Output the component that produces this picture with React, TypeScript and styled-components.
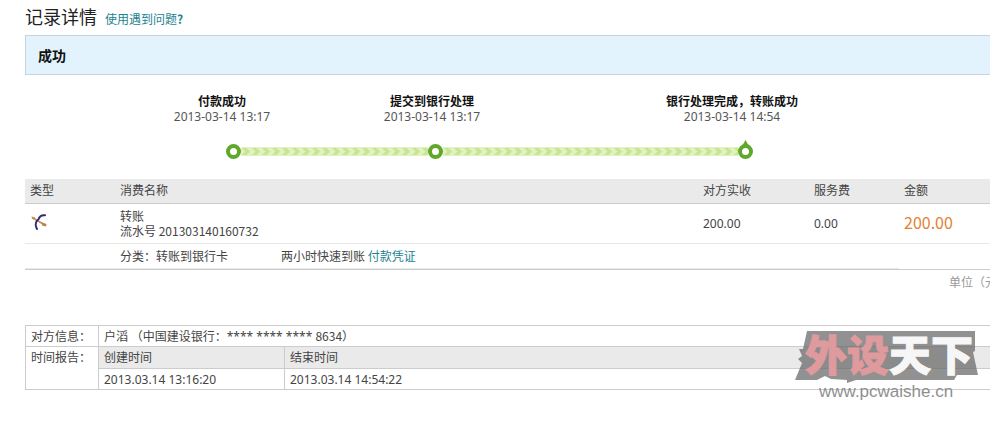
import React from "react";
import styled, { createGlobalStyle } from "styled-components";

const GlobalStyle = createGlobalStyle`
  *, *::before, *::after { box-sizing: border-box; }
  body {
    margin: 0;
    background: #fff;
    color: #444;
    font-family: "Noto Sans CJK SC", "Noto Sans", sans-serif;
    font-size: 12px;
    line-height: 15px;
  }
`;

const Page = styled.div`
  overflow: hidden;
`;

const Content = styled.main`
  margin: 0 -25px 24px 25px;
`;

const TitleBar = styled.header`
  display: flex;
  align-items: baseline;
  gap: 8px;
  padding-top: 3px;
  height: 35px;
`;

const Title = styled.h1`
  margin: 0;
  font-size: 18px;
  line-height: 26px;
  font-weight: 400;
  color: #222;
`;

const Link = styled.a`
  color: #1b8391;
  text-decoration: none;
`;

const StatusBanner = styled.div`
  padding: 9px 12px;
  border: 1px solid #c5d5e0;
  background: #e2f3fe;
  color: #111;
  font-size: 14px;
  line-height: 20px;
  font-weight: 700;
`;

const Steps = styled.ol`
  display: grid;
  grid-template-columns: 210px 210px 390px;
  margin: 18px 0 0 92px;
  padding: 0;
  list-style: none;
`;

const Step = styled.li`
  display: flex;
  flex-direction: column;
  align-items: center;
  color: #555;
  line-height: 16px;
`;

const StepName = styled.strong`
  color: #111;
`;

const Numeric = styled.span`
  font-family: "Noto Sans", sans-serif;
`;

const Track = styled.div`
  display: flex;
  align-items: flex-end;
  margin: 15px 0 20px 201px;
`;

const Segment = styled.svg<{ $length: number }>`
  display: block;
  width: ${(p) => p.$length}px;
  height: 9px;
  margin-bottom: 3px;
`;

const Marker = styled.svg`
  display: block;
  width: 15px;
  height: 19px;
`;

const RecordTable = styled.table`
  width: 100%;
  table-layout: fixed;
  border-collapse: separate;
  border-spacing: 0;
  border-bottom: 1px solid #ccc;
`;

const Col = styled.col<{ $width?: number }>`
  width: ${(p) => (p.$width ? `${p.$width}px` : "auto")};
`;

const HeadCell = styled.th`
  height: 25px;
  padding: 0 5px 3px;
  border-bottom: 1px solid #ccc;
  background: #eaeaea;
  font-weight: 400;
  text-align: left;
`;

const Cell = styled.td`
  height: 40px;
  padding: 0 5px 2px;
  border-bottom: 1px solid #e8e8e8;
`;

const NoteCell = styled.td<{ $plain?: boolean }>`
  height: 25px;
  padding: 0 5px 2px;
  border-bottom: ${(p) => (p.$plain ? "0" : "1px solid #e8e8e8")};
`;

const Notes = styled.div`
  display: flex;
  gap: 53px;
`;

const TypeIcon = styled.svg`
  display: block;
  width: 16px;
  height: 16px;
  margin: 0 0 2px 1px;
`;

const Amount = styled.span`
  color: #e47f35;
  font-size: 16px;
`;

const Unit = styled.p`
  margin: 4px 6px 0 0;
  color: #999;
  text-align: right;
`;

const Details = styled.section`
  position: relative;
  margin-top: 36px;
`;

const DetailTable = styled.table`
  width: 100%;
  table-layout: fixed;
  border-spacing: 0;
  border: solid #ccc;
  border-width: 1px 0 0 1px;
`;

const DetailCell = styled.td<{ $shaded?: boolean }>`
  padding: 2px 5px 1px;
  border: solid #ccc;
  border-width: 0 1px 1px 0;
  background: ${(p) => (p.$shaded ? "#eaeaea" : "transparent")};
  font-weight: 400;
  text-align: left;
  vertical-align: top;
`;

const DetailRow = styled.tr<{ $height: number }>`
  height: ${(p) => p.$height}px;
`;

const Watermark = styled.svg`
  position: absolute;
  top: 4px;
  right: 34px;
  width: 188px;
  height: 76px;
  overflow: visible;
  pointer-events: none;
`;

const MarkText = styled.text`
  font-family: "Noto Sans CJK SC", sans-serif;
  font-size: 42px;
  font-weight: 900;
  stroke-width: 1;
`;

const MarkUrl = styled.text`
  font-family: "Liberation Sans", sans-serif;
  font-size: 17px;
`;

function StepMarker({ current }: { current?: boolean }) {
  return (
    <Marker viewBox="0 0 15 19" aria-hidden="true">
      {current && <path d="M7.5 0 11.5 7H3.5Z" fill="#60a829" />}
      <circle cx="7.5" cy="11.5" r="5.5" fill="#fff" stroke="#60a829" strokeWidth="4" />
    </Marker>
  );
}

function StepSegment({ length, id }: { length: number; id: string }) {
  return (
    <Segment $length={length} aria-hidden="true">
      <defs>
        <pattern id={id} width="10" height="9" patternUnits="userSpaceOnUse">
          <rect width="10" height="9" fill="#e0f2c0" />
          <path d="M1 1H5.5L9 4.5 5.5 8H1L4.5 4.5Z" fill="#c7e592" />
        </pattern>
      </defs>
      <rect width="100%" height="9" fill={`url(#${id})`} />
    </Segment>
  );
}

const steps = [
  { name: "付款成功", time: "2013-03-14 13:17" },
  { name: "提交到银行处理", time: "2013-03-14 13:17" },
  { name: "银行处理完成，转账成功", time: "2013-03-14 14:54" },
];

export default function App() {
  return (
    <Page>
      <GlobalStyle />
      <Content>
        <TitleBar>
          <Title>记录详情</Title>
          <Link href="#help">
            使用遇到问题<b>?</b>
          </Link>
        </TitleBar>
        <StatusBanner>成功</StatusBanner>

        <Steps>
          {steps.map((s) => (
            <Step key={s.name}>
              <StepName>{s.name}</StepName>
              <Numeric>{s.time}</Numeric>
            </Step>
          ))}
        </Steps>
        <Track>
          <StepMarker />
          <StepSegment length={187} id="chevrons-a" />
          <StepMarker />
          <StepSegment length={295} id="chevrons-b" />
          <StepMarker current />
        </Track>

        <RecordTable>
          <colgroup>
            <Col $width={90} />
            <Col />
            <Col $width={111} />
            <Col $width={90} />
            <Col $width={116} />
          </colgroup>
          <thead>
            <tr>
              <HeadCell>类型</HeadCell>
              <HeadCell>消费名称</HeadCell>
              <HeadCell>对方实收</HeadCell>
              <HeadCell>服务费</HeadCell>
              <HeadCell>金额</HeadCell>
            </tr>
          </thead>
          <tbody>
            <tr>
              <Cell>
                <TypeIcon viewBox="0 0 16 16" role="img" aria-label="转账">
                  <path d="M1.5 3.8 13.5 10.8" stroke="#b98a68" strokeWidth="1.6" />
                  <path d="M.5 2.5 4 3.3 3.5 5.8 1 4.8Z" fill="#c58c62" />
                  <path d="M11 8.5 15.5 10 15 12.5 11 11.5Z" fill="#bd7f50" />
                  <path
                    d="M14 1.2C10.5.8 8.500 2 7.500 5.300 4.500 7.500 4 11.500 6 15"
                    fill="none"
                    stroke="#302c66"
                    strokeWidth="2"
                    strokeLinecap="round"
                  />
                </TypeIcon>
              </Cell>
              <Cell>
                转账
                <br />
                流水号 201303140160732
              </Cell>
              <Cell>
                <Numeric>200.00</Numeric>
              </Cell>
              <Cell>
                <Numeric>0.00</Numeric>
              </Cell>
              <Cell>
                <Amount>200.00</Amount>
              </Cell>
            </tr>
            <tr>
              <NoteCell />
              <NoteCell colSpan={3}>
                <Notes>
                  <span>分类：转账到银行卡</span>
                  <span>
                    两小时快速到账 <Link href="#voucher">付款凭证</Link>
                  </span>
                </Notes>
              </NoteCell>
              <NoteCell $plain />
            </tr>
          </tbody>
        </RecordTable>
        <Unit>单位（元）</Unit>

        <Details>
          <DetailTable>
            <colgroup>
              <Col $width={73} />
              <Col $width={186} />
              <Col />
            </colgroup>
            <tbody>
              <DetailRow $height={21}>
                <DetailCell as="th" scope="row">对方信息：</DetailCell>
                <DetailCell colSpan={2}>
                  户滔 （中国建设银行：<Numeric>**** **** **** </Numeric>8634）
                </DetailCell>
              </DetailRow>
              <DetailRow $height={22}>
                <DetailCell as="th" scope="row" rowSpan={2}>时间报告：</DetailCell>
                <DetailCell as="th" scope="col" $shaded>创建时间</DetailCell>
                <DetailCell as="th" scope="col" $shaded>结束时间</DetailCell>
              </DetailRow>
              <DetailRow $height={21}>
                <DetailCell>
                  <Numeric>2013.03.14 13:16:20</Numeric>
                </DetailCell>
                <DetailCell>
                  <Numeric>2013.03.14 14:54:22</Numeric>
                </DetailCell>
              </DetailRow>
            </tbody>
          </DetailTable>
          <Watermark viewBox="0 0 188 76" role="img" aria-label="外设天下 www.pcwaishe.cn">
            <path
              d="M14 2H182V22L180 23 185 46H164L161 51H63L54 54V51L38 50 32 47 24 51H2L9 34 5 30 9 27 6 20H10Z"
              fill="#666"
              fillOpacity=".72"
            />
            <MarkText x="12" y="42" fill="#df9a9e" stroke="#df9a9e">外设</MarkText>
            <MarkText x="96" y="42" fill="#fff" stroke="#fff" opacity=".93">天下</MarkText>
            <MarkUrl x="26" y="68" fill="#8f8f8f">www.pcwaishe.cn</MarkUrl>
          </Watermark>
        </Details>
      </Content>
    </Page>
  );
}
